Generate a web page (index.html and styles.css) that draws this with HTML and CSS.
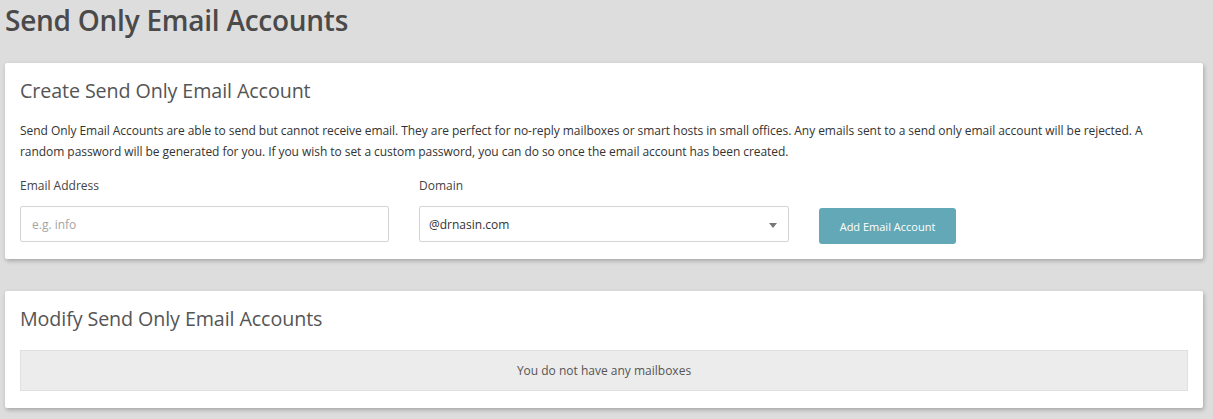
FILE: index.html
```html
<!DOCTYPE html>
<html>
<head>
<meta charset="utf-8">
<link rel="stylesheet" href="styles.css">
</head>
<body>
<h1 class="page-title">Send Only Email Accounts</h1>
<section class="card card-create">
  <h2 class="card-title">Create Send Only Email Account</h2>
  <p class="card-text">Send Only Email Accounts are able to send but cannot receive email. They are perfect for no-reply mailboxes or smart hosts in small offices. Any emails sent to a send only email account will be rejected. A random password will be generated for you. If you wish to set a custom password, you can do so once the email account has been created.</p>
  <div class="form-row">
    <div class="field">
      <label class="field-label">Email Address</label>
      <div class="input">e.g. info</div>
    </div>
    <div class="field">
      <label class="field-label">Domain</label>
      <div class="select"><span>@drnasin.com</span><span class="caret"></span></div>
    </div>
    <div class="field field-btn">
      <button class="btn">Add Email Account</button>
    </div>
  </div>
</section>
<section class="card card-modify">
  <h2 class="card-title">Modify Send Only Email Accounts</h2>
  <div class="empty">You do not have any mailboxes</div>
</section>
</body>
</html>
```

FILE: styles.css
```css
html, body {
  margin: 0;
  padding: 0;
}
body {
  background-color: #dddddd;
  font-family: "Open Sans", "Noto Sans", sans-serif;
  color: #333;
  padding: 0 10px 0 5px;
  height: 419px;
  overflow: hidden;
}
.page-title {
  margin: 0;
  padding: 2px 0 0 0;
  font-size: 28px;
  font-weight: 600;
  color: #4a4a4a;
  line-height: 36px;
  height: 61px;
  letter-spacing: -0.25px;
}
.card {
  background: #fff;
  box-shadow: 1px 2px 4px rgba(0,0,0,0.25);
  border-radius: 2px;
  padding: 0 15px;
}
.card-create {
  height: 196px;
}
.card-modify {
  margin-top: 32px;
  height: 117px;
}
.card-title {
  margin: 0;
  padding-top: 16px;
  font-size: 19.7px;
  font-weight: 400;
  color: #555;
  line-height: 24px;
  letter-spacing: -0.1px;
}
.card-text {
  margin: 17px 0 0 0;
  font-size: 12px;
  line-height: 21px;
  color: #333;
  letter-spacing: -0.05px;
}
.form-row {
  display: grid;
  grid-template-columns: 369px 370px auto;
  column-gap: 30px;
  margin-top: 16px;
}
.field-label {
  display: block;
  font-size: 12px;
  color: #444;
  line-height: 16px;
  height: 28px;
}
.input, .select {
  box-sizing: border-box;
  height: 36px;
  border: 1px solid #d4d4d4;
  border-radius: 2px;
  padding: 0 11px;
  display: flex;
  align-items: center;
  font-size: 12px;
}
.input {
  color: #a5a5a5;
}
.select {
  color: #333;
  justify-content: space-between;
  padding-left: 9px;
  padding-right: 11px;
}
.caret {
  width: 0;
  height: 0;
  border-left: 4px solid transparent;
  border-right: 4px solid transparent;
  border-top: 5px solid #777;
  margin-top: 2px;
}
.field-btn {
  padding-top: 30px;
}
.btn {
  background: #63a8b6;
  color: #fff;
  border: none;
  border-radius: 3px;
  font-family: "Open Sans", "Noto Sans", sans-serif;
  font-size: 11px;
  height: 36px;
  width: 137px;
  padding: 0;
}
.empty {
  margin-top: 19px;
  background: #ececec;
  border: 1px solid #e0e0e0;
  height: 41px;
  box-sizing: border-box;
  display: flex;
  align-items: center;
  justify-content: center;
  font-size: 12px;
  color: #555;
}
```
